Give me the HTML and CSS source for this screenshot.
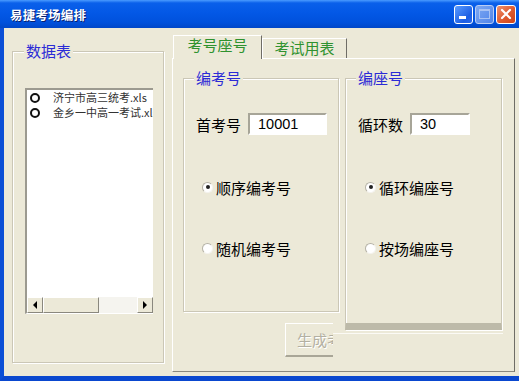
FILE: index.html
```html
<!DOCTYPE html>
<html lang="zh">

<head>
    <meta charset="UTF-8">
    <title>易捷考场编排</title>
    <link rel="stylesheet" href="styles.css">
</head>

<body>

    <div class="window">
        <div class="titlebar">
            <span class="title">易捷考场编排</span>
            <div class="title-buttons">
                <span class="tb-btn tb-min"><span class="min-bar"></span></span>
                <span class="tb-btn tb-max"><span class="max-box"></span></span>
                <span class="tb-btn tb-close">
                    <svg width="12" height="12" viewBox="0 0 12 12">
                        <path d="M2 2 L10 10 M10 2 L2 10" stroke="#fff" stroke-width="2.2" stroke-linecap="round"/>
                    </svg>
                </span>
            </div>
        </div>

        <div class="client">
            <!-- 数据表 -->
            <div class="group data-group">
                <span class="legend">数据表</span>
                <div class="listbox">
                    <ul class="list">
                        <li><span class="list-radio"></span>济宁市高三统考.xls</li>
                        <li><span class="list-radio"></span>金乡一中高一考试.xls</li>
                    </ul>
                    <div class="hscroll">
                        <span class="sb-btn"><span class="arrow-left"></span></span>
                        <span class="sb-thumb"></span>
                        <span class="sb-track"></span>
                        <span class="sb-btn"><span class="arrow-right"></span></span>
                    </div>
                </div>
            </div>

            <!-- Tabs -->
            <div class="tabs">
                <div class="tab-row">
                    <div class="tab tab-active">考号座号</div>
                    <div class="tab">考试用表</div>
                </div>
                <div class="tab-panel">
                    <div class="col-left">
                        <div class="group num-group">
                            <span class="legend">编考号</span>
                            <div class="field-row">
                                <span class="field-label">首考号</span>
                                <span class="textbox num-box">10001</span>
                            </div>
                            <div class="radio-row first-radio">
                                <span class="radio checked"></span>顺序编考号
                            </div>
                            <div class="radio-row">
                                <span class="radio"></span>随机编考号
                            </div>
                        </div>
                        <div class="gen-btn">生成考号</div>
                    </div>

                    <div class="col-right">
                        <div class="group seat-group">
                            <span class="legend">编座号</span>
                            <div class="field-row">
                                <span class="field-label">循环数</span>
                                <span class="textbox seat-box">30</span>
                            </div>
                            <div class="radio-row first-radio">
                                <span class="radio checked"></span>循环编座号
                            </div>
                            <div class="radio-row">
                                <span class="radio"></span>按场编座号
                            </div>
                        </div>
                        <div class="seat-shadow"></div>
                    </div>
                </div>
            </div>
        </div>
    </div>

</body>

</html>
```

FILE: styles.css
```css
body {
    margin: 0;
    font-family: "Noto Sans CJK SC", sans-serif;
    background: #ece9d8;
}

.window {
    width: 519px;
    height: 381px;
    background: #ece9d8;
    overflow: hidden;
}

/* title bar */
.titlebar {
    height: 28px;
    display: flex;
    align-items: center;
    justify-content: space-between;
    background: linear-gradient(#4a9bff 0, #0a60ea 3px, #0358e6 45%, #0051dc 80%, #0047c8 100%);
}

.title {
    margin-left: 10px;
    color: #fff;
    font-size: 12.5px;
    font-weight: bold;
    letter-spacing: 0.2px;
    text-shadow: 1px 1px 0 #0a1f6e;
}

.title-buttons {
    display: flex;
    gap: 2px;
    margin-right: 3px;
}

.tb-btn {
    width: 19px;
    height: 19px;
    border: 1px solid #fff;
    border-radius: 3px;
    box-sizing: border-box;
    display: flex;
    align-items: center;
    justify-content: center;
}

.tb-min {
    background: linear-gradient(135deg, #5a9cff, #1c5ee4 70%, #2a68ea);
    align-items: flex-end;
    justify-content: flex-start;
}

.min-bar {
    width: 7px;
    height: 3px;
    background: #fff;
    margin: 0 0 4px 4px;
}

.tb-max {
    background: linear-gradient(135deg, #7fa9f2, #4f84ea);
    border-color: #b9cdf5;
}

.max-box {
    width: 9px;
    height: 7px;
    border: 1px solid #a8c2f4;
    border-top-width: 2px;
}

.tb-close {
    width: 20px;
    background: linear-gradient(135deg, #ed9270, #de5a2f 55%, #cf4318);
}

/* client area */
.client {
    height: 353px;
    box-sizing: border-box;
    border-left: 4px solid #0b4fd6;
    border-bottom: 5px solid #0a48cf;
    display: flex;
    align-items: flex-start;
}

.group {
    border: 1px solid #cbc7b6;
    box-shadow: 1px 1px 0 #fff, inset 1px 1px 0 #fff;
    box-sizing: border-box;
}

.legend {
    display: block;
    width: fit-content;
    margin: -10px 0 0 10px;
    padding: 0 2px;
    height: 18px;
    line-height: 18px;
    font-size: 15px;
    color: #2b2bd6;
    background: #ece9d8;
}

.data-group {
    width: 152px;
    height: 312px;
    margin: 23px 0 0 8px;
}

.data-group .legend {
    margin-left: 11px;
}

/* list box */
.listbox {
    width: 128px;
    height: 226px;
    margin: 28px 0 0 12px;
    box-sizing: border-box;
    border-top: 2px solid #9c9a90;
    border-left: 2px solid #9c9a90;
    border-bottom: 1px solid #fff;
    background: #fff;
    display: flex;
    flex-direction: column;
    overflow: hidden;
}

.list {
    list-style: none;
    margin: 0;
    padding: 0;
    flex: 1;
}

.list li {
    height: 15px;
    line-height: 15px;
    font-size: 11px;
    color: #333;
    white-space: nowrap;
    display: flex;
    align-items: center;
}

.list-radio {
    width: 10px;
    height: 10px;
    box-sizing: border-box;
    border: 2px solid #111;
    border-radius: 50%;
    margin: 0 13px 0 3px;
    flex: none;
}

.hscroll {
    height: 16px;
    display: flex;
    flex: none;
}

.sb-btn {
    width: 16px;
    height: 16px;
    box-sizing: border-box;
    background: #ece9d8;
    border: 1px solid #fff;
    border-right-color: #8a887e;
    border-bottom-color: #8a887e;
    display: flex;
    align-items: center;
    justify-content: center;
    flex: none;
}

.arrow-left {
    border-top: 4px solid transparent;
    border-bottom: 4px solid transparent;
    border-right: 4px solid #000;
}

.arrow-right {
    border-top: 4px solid transparent;
    border-bottom: 4px solid transparent;
    border-left: 4px solid #000;
}

.sb-thumb {
    width: 56px;
    height: 16px;
    box-sizing: border-box;
    background: #ece9d8;
    border: 1px solid #fff;
    border-right-color: #8a887e;
    border-bottom-color: #8a887e;
}

.sb-track {
    width: 38px;
    background: #f5f4ef;
}

/* tabs */
.tabs {
    width: 343px;
    margin: 7px 0 0 8px;
}

.tab-row {
    display: flex;
    align-items: flex-end;
    height: 23px;
    padding-left: 1px;
}

.tab {
    width: 85px;
    height: 20px;
    box-sizing: border-box;
    border-top: 1px solid #fff;
    border-left: 1px solid #fff;
    border-right: 1px solid #6f6d66;
    text-align: center;
    line-height: 18px;
    font-size: 15px;
    color: #2f922f;
    background: #ece9d8;
}

.tab-active {
    width: 89px;
    height: 24px;
    margin-bottom: -1px;
    position: relative;
    z-index: 1;
}

.tab-panel {
    height: 314px;
    box-sizing: border-box;
    border: 1px solid #fff;
    border-right-color: #6f6d66;
    border-bottom-color: #8a887e;
    display: flex;
    align-items: flex-start;
}

.col-left {
    margin: 19px 0 0 10px;
}

.num-group {
    width: 156px;
    height: 234px;
}

.field-row {
    display: flex;
    align-items: center;
    margin: 26px 0 0 12px;
    height: 22px;
}

.field-label {
    width: 52px;
    font-size: 15px;
    color: #000;
}

.textbox {
    height: 22px;
    box-sizing: border-box;
    border: 2px solid #fff;
    border-top-color: #a7a598;
    border-left-color: #a7a598;
    background: #fff;
    padding-left: 8px;
    font-family: "Liberation Sans", Arial, sans-serif;
    font-size: 14.5px;
    line-height: 18px;
    color: #000;
}

.num-box {
    width: 79px;
}

.seat-box {
    width: 60px;
}

.radio-row {
    display: flex;
    align-items: center;
    height: 18px;
    margin: 43px 0 0 18px;
    font-size: 15px;
    color: #000;
}

.first-radio {
    margin-top: 43px;
}

.radio {
    width: 11px;
    height: 11px;
    box-sizing: border-box;
    border: 1px solid #b5b2a6;
    border-right-color: #f4f3ee;
    border-bottom-color: #f4f3ee;
    border-radius: 50%;
    background: #fff;
    margin-right: 3px;
    display: flex;
    align-items: center;
    justify-content: center;
}

.radio.checked::after {
    content: "";
    width: 4px;
    height: 4px;
    border-radius: 50%;
    background: #222;
}

.gen-btn {
    width: 48px;
    height: 34px;
    box-sizing: border-box;
    margin: 11px 0 0 102px;
    border-top: 1px solid #fff;
    border-left: 1px solid #fff;
    border-bottom: 2px solid #a9a697;
    padding-left: 11px;
    line-height: 31px;
    font-size: 15px;
    color: #b3b0a2;
    text-shadow: 1px 1px 0 #fff;
    white-space: nowrap;
    overflow: hidden;
}

.col-right {
    margin: 19px 0 0 6px;
}

.seat-group {
    width: 157px;
    height: 252px;
    border-bottom: 7px solid #bdbaa9;
}

.seat-group .radio-row {
    margin-left: 19px;
}

.seat-shadow {
    width: 170px;
    height: 1px;
    margin: 3px 0 0 -12px;
    background: #fbfaf5;
}
```
